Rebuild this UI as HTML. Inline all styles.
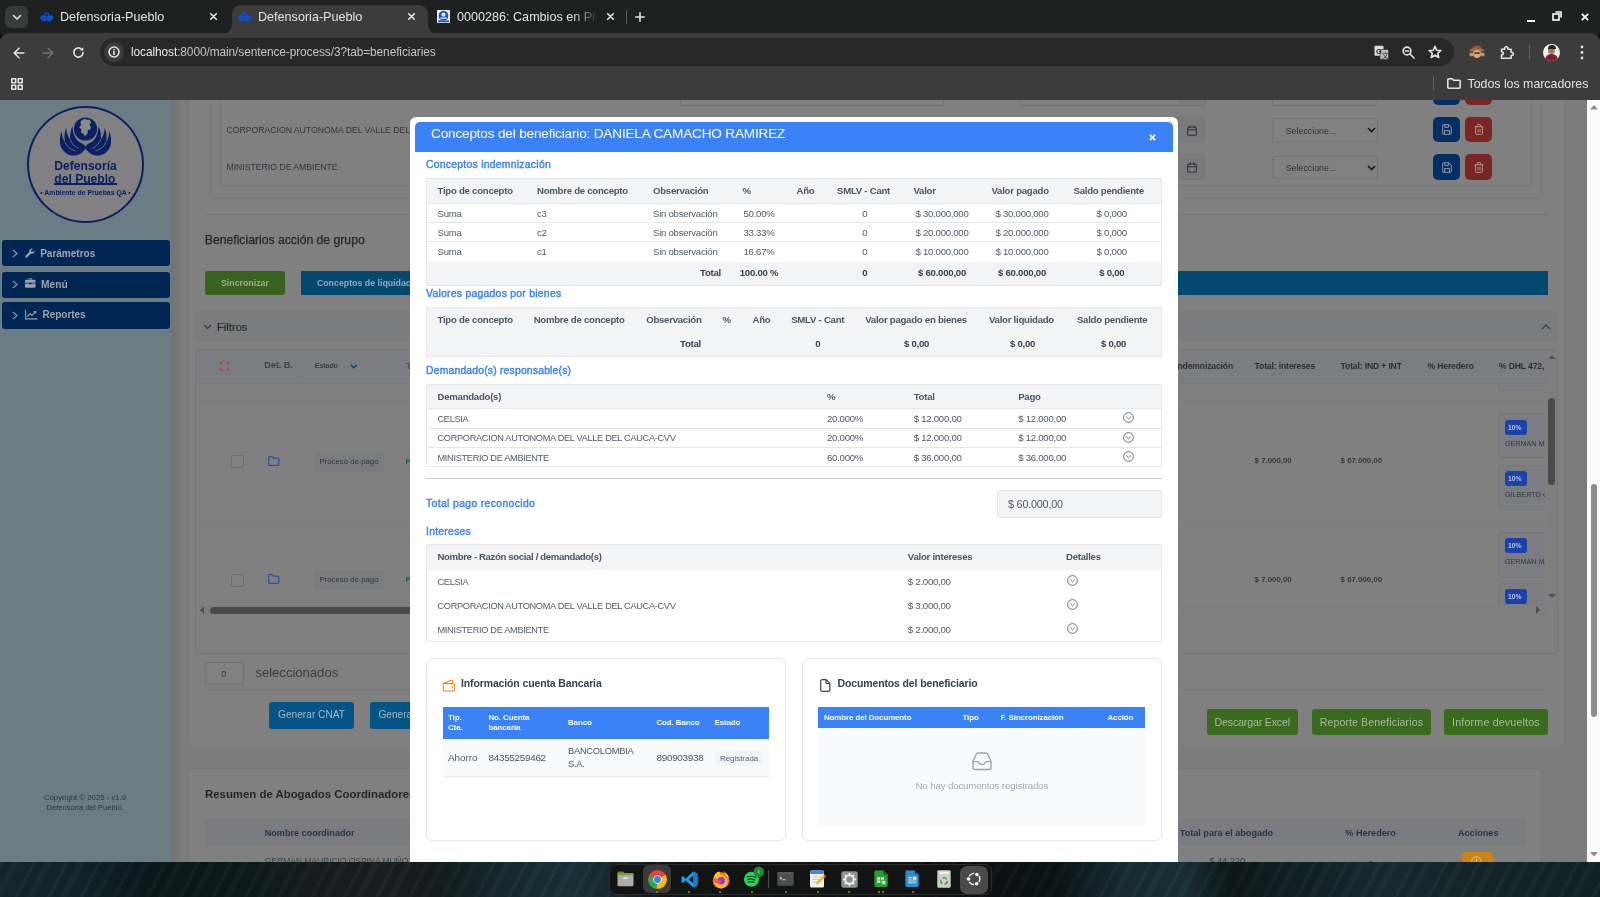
<!DOCTYPE html>
<html lang="es">
<head>
<meta charset="utf-8">
<title>Defensoria-Pueblo</title>
<style>
*{box-sizing:border-box}
html,body{margin:0;padding:0}
body{width:1600px;height:897px;overflow:hidden;position:relative;background:#0c1416;font-family:"Liberation Sans",sans-serif;color:#333}
.a{position:absolute}
#screen{left:0;top:0;width:1600px;height:897px;overflow:hidden;will-change:transform;filter:opacity(1)}
.t{position:absolute;white-space:nowrap;line-height:1;transform:translateY(-50%)}
svg{display:block;overflow:visible}

/* ---------- browser chrome ---------- */
#tabstrip{left:0;top:0;width:1600px;height:34px;background:#1f2020}
#toolbar{left:0;top:33px;width:1600px;height:67px;background:#3c3c3c;border-radius:9px 9px 0 0}
#acttab{left:232px;top:5px;width:196px;height:29px;background:#3c3c3c;border-radius:9px 9px 0 0}
#acttab:before,#acttab:after{content:"";position:absolute;bottom:0;width:9px;height:9px}
#acttab:before{left:-9px;background:radial-gradient(circle at 0 0,transparent 8.5px,#3c3c3c 9px)}
#acttab:after{right:-9px;background:radial-gradient(circle at 100% 0,transparent 8.5px,#3c3c3c 9px)}
#tabsearch{left:5px;top:6px;width:23px;height:22px;background:#3a3b3b;border-radius:6px}
.tabt{color:#e3e3e3;font-size:12.6px}
#url{left:100px;top:38px;width:1354px;height:28px;border-radius:14px;background:#282828}
.ic{stroke:#e3e3e3;fill:none;stroke-width:1.6;stroke-linecap:round;stroke-linejoin:round}

/* ---------- page (dimmed behind modal) ---------- */
#side{left:0;top:100px;width:171px;height:762px;background:#6c7c84}
#main{left:171px;top:100px;width:1416px;height:762px;background:#7c7c7c}
#sbar{left:1587px;top:100px;width:13px;height:762px;background:#fbfbfb}
.nav{left:2px;width:168px;height:26px;background:#002654;border-radius:3px;color:#aeb4bd;font-weight:700;font-size:10.8px}
.card{background:#808080;border:1px solid #787878;border-radius:5px}
.ln{background:#767676}
.dt{color:#2b2b2b;font-size:9px;letter-spacing:-.15px}
.dth{color:#2e2e2e;font-size:8.6px;font-weight:700;letter-spacing:-.15px}
.btn{border-radius:3px;text-align:center}

.hc{left:0;width:70px;background:#7b7d81;border:1px solid #74767a;border-radius:4px}
.hb{left:6.600px;width:22px;height:15px;border-radius:3px;background:#1a42a8}
.hp{left:9.500px;color:#b9c3dd;font-size:6.800px;font-weight:700}
.hn{left:6.600px;color:#33363b;font-size:7.200px}
/* ---------- modal ---------- */
#modal{left:410px;top:116.800px;width:767.500px;height:760px;background:#fff;border-radius:6px 6px 0 0}
#mhead{left:415px;top:122px;width:757.500px;height:29.500px;background:#3b82f6;border-radius:5px 5px 0 0}
.sec{color:#3b82f6;font-size:10.400px;letter-spacing:.26px;-webkit-text-stroke:.4px #3b82f6}
table.g{position:absolute;border-collapse:collapse;table-layout:fixed;font-size:9.6px;letter-spacing:-.25px;color:#505a68;border:1px solid #e5e7eb}
table.g th,table.g td{padding:1px 0 0 10.5px;text-align:left;vertical-align:middle;overflow:hidden;white-space:nowrap;line-height:1}
table.g th{padding-top:0;font-weight:700;color:#4b5563;background:#f3f4f6}
table.g td.c,table.g th.c{text-align:center;padding:1px 0 0}
table.g td.r{text-align:right;padding:1px 11px 0 0}
table.g td.u{font-size:9.2px;letter-spacing:-.3px;padding-top:2.400px}
table.g tr.f td{padding-top:0;background:#f3f4f6;font-weight:700;color:#374151}
table.g tr.b td{border-top:1px solid #e5e7eb}
table.g tr.n td{padding-top:0}
.mcard{border:1px solid #e5e7eb;border-radius:6px;background:#fff}
.bh{background:#3b82f6}
.bht{color:#fff;font-weight:700;font-size:7.9px;letter-spacing:-.08px}
.bt{color:#4b5563;font-size:9.9px}

/* ---------- desktop ---------- */
#desk{left:0;top:862px;width:1600px;height:35px;z-index:50;background:repeating-linear-gradient(118deg,rgba(255,255,255,.025) 0 3px,rgba(0,0,0,.08) 3px 11px,rgba(255,255,255,.015) 11px 17px,rgba(0,0,0,.05) 17px 29px),linear-gradient(90deg,#15282e 0,#13252b 5%,#0c181c 9%,#0d1a1e 15%,#151d1e 19%,#1a2122 24%,#141c1d 27%,#16292f 31%,#1a3239 36%,#14262c 39%,#0b1315 42%,#0a1113 61%,#0b1417 66%,#172c33 70%,#1a3138 74%,#0d171a 77%,#111f24 80%,#182b31 86%,#15262b 93%,#13232800 100%),#132328}
#dock{left:608.500px;top:863.500px;width:383px;height:31.500px;z-index:51;background:#121414;border:1px solid #2c2e2e;border-radius:7px}
.dot{top:890.700px;width:2px;height:2px;border-radius:1px;background:#6aa51d}
</style>
</head>
<body>
<div class="a" id="screen">

<!-- ======================= BROWSER CHROME ======================= -->
<div class="a" id="tabstrip"></div>
<div class="a" id="toolbar"></div>
<div class="a" id="acttab"></div>
<div class="a" id="tabsearch"></div>
<!-- tab search chevron -->
<svg class="a" style="left:11.5px;top:13.5px" width="10" height="7" viewBox="0 0 10 7"><path d="M1.5 1.5 5 5 8.500 1.5" class="ic" stroke-width="1.8"/></svg>
<!-- tab 1 -->
<svg class="a" style="left:40px;top:11px" width="14" height="11" viewBox="0 0 14 11"><circle cx="6.600" cy="3.900" r="2.050" fill="none" stroke="#0b50d4" stroke-width="1.400"/><ellipse cx="3.500" cy="7.300" rx="3.500" ry="2.500" transform="rotate(38 3.500 7.300)" fill="#0b50d4"/><ellipse cx="9.900" cy="7.300" rx="3.500" ry="2.500" transform="rotate(-38 9.900 7.300)" fill="#0b50d4"/></svg>
<div class="t tabt" style="left:60px;top:17px">Defensoria-Pueblo</div>
<svg class="a" style="left:209.600px;top:13.400px" width="7" height="7" viewBox="0 0 7 7"><path d="M.7.700 6.300 6.300M6.300.700.7 6.300" class="ic" stroke-width="1.400"/></svg>
<!-- tab 2 (active) -->
<svg class="a" style="left:238px;top:11px" width="14" height="11" viewBox="0 0 14 11"><circle cx="6.600" cy="3.900" r="2.050" fill="none" stroke="#0b50d4" stroke-width="1.400"/><ellipse cx="3.500" cy="7.300" rx="3.500" ry="2.500" transform="rotate(38 3.500 7.300)" fill="#0b50d4"/><ellipse cx="9.900" cy="7.300" rx="3.500" ry="2.500" transform="rotate(-38 9.900 7.300)" fill="#0b50d4"/></svg>
<div class="t tabt" style="left:258px;top:17px">Defensoria-Pueblo</div>
<svg class="a" style="left:407.600px;top:13.400px" width="7" height="7" viewBox="0 0 7 7"><path d="M.7.700 6.300 6.300M6.300.700.7 6.300" class="ic" stroke-width="1.400"/></svg>
<!-- tab 3 -->
<div class="a" style="left:436.700px;top:10px;width:13.300px;height:13px;background:#f4f6fa;border-radius:1px"></div>
<svg class="a" style="left:436.850px;top:10px" width="13" height="13" viewBox="0 0 13 13"><circle cx="6.500" cy="5.700" r="4.900" fill="#1b55b3"/><circle cx="6.500" cy="4.700" r="2.100" fill="#dfe7f5"/><path d="M3.300 7.500h6.400v1.300H3.300z" fill="#dfe7f5"/><rect x="1" y="10.400" width="11" height="1.900" fill="#1b55b3"/></svg>
<div class="a" style="left:457px;top:8px;width:141px;height:18px;overflow:hidden;-webkit-mask-image:linear-gradient(90deg,#000 82%,transparent 100%);mask-image:linear-gradient(90deg,#000 82%,transparent 100%)"><div class="t tabt" style="left:0;top:9px">0000286: Cambios en Proceso</div></div>
<svg class="a" style="left:606.600px;top:13.400px" width="7" height="7" viewBox="0 0 7 7"><path d="M.7.700 6.300 6.300M6.300.700.7 6.300" class="ic" stroke-width="1.400"/></svg>
<div class="a" style="left:625.5px;top:10px;width:1px;height:14px;background:#5a5b5b"></div>
<svg class="a" style="left:635px;top:12px" width="10" height="10" viewBox="0 0 10 10"><path d="M5 .8V9.200M.8 5H9.200" class="ic" stroke-width="1.500"/></svg>
<!-- window controls -->
<div class="a" style="left:1526.500px;top:19.500px;width:8.500px;height:2px;background:#fff"></div>
<svg class="a" style="left:1552px;top:11px" width="10" height="10" viewBox="0 0 10 10"><rect x="1" y="3" width="6" height="6" fill="none" stroke="#fff" stroke-width="1.600"/><path d="M3.500 1H9V6.500" fill="none" stroke="#fff" stroke-width="1.600"/></svg>
<svg class="a" style="left:1581px;top:12.500px" width="8" height="8" viewBox="0 0 8 8"><path d="M.8.8 7.200 7.200M7.200.8.8 7.200" fill="none" stroke="#fff" stroke-width="1.800"/></svg>
<!-- nav buttons -->
<svg class="a" style="left:12.500px;top:46.500px" width="12" height="12" viewBox="0 0 12 12"><path d="M11 6H1.500M6 1.200 1.200 6 6 10.800" class="ic" stroke-width="1.500"/></svg>
<svg class="a" style="left:42px;top:46.500px" width="12" height="12" viewBox="0 0 12 12"><path d="M1 6H10.500M6 1.200 10.800 6 6 10.800" class="ic" style="stroke:#6f7070" stroke-width="1.500"/></svg>
<svg class="a" style="left:72px;top:46px" width="13" height="13" viewBox="0 0 13 13"><path d="M11 6.500A4.600 4.600 0 1 1 9.600 3.200" class="ic" stroke-width="1.600"/><path d="M11.300 1.300V4.600H8z" fill="#e3e3e3"/></svg>
<!-- url bar -->
<div class="a" id="url"></div>
<div class="a" style="left:104px;top:42px;width:20px;height:20px;border-radius:10px;background:#3c3c3c"></div>
<svg class="a" style="left:108px;top:46px" width="12" height="12" viewBox="0 0 12 12"><circle cx="6" cy="6" r="5" class="ic" stroke-width="1.300"/><path d="M6 5.500V8.600" class="ic" stroke-width="1.400"/><circle cx="6" cy="3.600" r=".8" fill="#e3e3e3"/></svg>
<div class="t" style="left:131px;top:52.500px;font-size:11.900px;letter-spacing:-.09px;color:#e8e8e8">localhost<span style="color:#c4c4c4">:8000/main/sentence-process/3?tab=beneficiaries</span></div>
<!-- url icons -->
<svg class="a" style="left:1374px;top:45px" width="15" height="15" viewBox="0 0 15 15"><rect x=".5" y=".8" width="9" height="10" rx="1" fill="#dcdcdc"/><rect x="6" y="4.500" width="8.500" height="10" rx="1" fill="#bdbdbd" stroke="#282828" stroke-width=".6"/><text x="2" y="8.800" font-size="7.500" font-weight="700" font-family="Liberation Sans, sans-serif" fill="#282828">G</text><text x="8" y="12.800" font-size="6.500" font-family="Liberation Sans, Noto Sans CJK SC, sans-serif" fill="#282828">文</text></svg>
<svg class="a" style="left:1402px;top:46px" width="13" height="13" viewBox="0 0 13 13"><circle cx="5" cy="5" r="3.900" class="ic" stroke-width="1.500"/><path d="M8 8 12 12M3.300 5H6.700" class="ic" stroke-width="1.500"/></svg>
<svg class="a" style="left:1428px;top:45px" width="14" height="14" viewBox="0 0 14 14"><path d="M7 1.300 8.700 5.200 12.900 5.500 9.700 8.300 10.700 12.500 7 10.200 3.300 12.500 4.300 8.300 1.100 5.500 5.300 5.200z" class="ic" stroke-width="1.400"/></svg>
<!-- extensions -->
<svg class="a" style="left:1469px;top:45px" width="16" height="14" viewBox="0 0 16 14"><ellipse cx="8" cy="4" rx="5" ry="3.500" fill="#8c5a3c"/><ellipse cx="8" cy="5.300" rx="7.500" ry="1.700" fill="#a86f4a"/><ellipse cx="8" cy="9" rx="4.300" ry="4" fill="#d9a57e"/><circle cx="2.300" cy="9.500" r="2" fill="#c98f68"/><circle cx="13.700" cy="9.500" r="2" fill="#c98f68"/><rect x="5" y="7.300" width="6" height="1.600" rx=".8" fill="#5c3b28"/></svg>
<svg class="a" style="left:1500px;top:45px" width="14" height="14" viewBox="0 0 14 14"><path d="M1.500 4.200h3.200V3.300a1.600 1.600 0 0 1 3.200 0v.9h3.200v3.100h.6a1.600 1.600 0 0 1 0 3.200h-.6v2.800H1.500V9.800h.300a1.500 1.500 0 0 0 0-3h-.3z" class="ic" stroke-width="1.600"/></svg>
<div class="a" style="left:1528.500px;top:45px;width:1px;height:14px;background:#5e5e5e"></div>
<div class="a" style="left:1543px;top:43.500px;width:17px;height:17px;border-radius:50%;background:#f3f1f0;overflow:hidden"><div class="a" style="left:5px;top:2.500px;width:7px;height:8px;border-radius:50%;background:#a9765c"></div><div class="a" style="left:4.500px;top:1.500px;width:8px;height:3.500px;border-radius:4px 4px 0 0;background:#2a2020"></div><div class="a" style="left:2px;top:10px;width:13px;height:9px;border-radius:6px 6px 0 0;background:#7a1f2b"></div></div>
<svg class="a" style="left:1580px;top:45px" width="4" height="15" viewBox="0 0 4 15"><circle cx="2" cy="2" r="1.400" fill="#e3e3e3"/><circle cx="2" cy="7.500" r="1.400" fill="#e3e3e3"/><circle cx="2" cy="13" r="1.400" fill="#e3e3e3"/></svg>
<!-- bookmarks bar -->
<svg class="a" style="left:10.500px;top:77.500px" width="12" height="12" viewBox="0 0 12 12"><rect x=".8" y=".8" width="3.900" height="3.900" class="ic" stroke-width="1.300"/><rect x="7.300" y=".8" width="3.900" height="3.900" class="ic" stroke-width="1.300"/><rect x=".8" y="7.300" width="3.900" height="3.900" class="ic" stroke-width="1.300"/><rect x="7.300" y="7.300" width="3.900" height="3.900" class="ic" stroke-width="1.300"/></svg>
<div class="a" style="left:1432.500px;top:77px;width:1px;height:13px;background:#666"></div>
<svg class="a" style="left:1446.500px;top:77.500px" width="14" height="11" viewBox="0 0 14 11"><path d="M.8 1.800a1 1 0 0 1 1-1h3.400l1.300 1.500h5.700a1 1 0 0 1 1 1v6a1 1 0 0 1-1 1H1.800a1 1 0 0 1-1-1z" class="ic" stroke-width="1.400"/></svg>
<div class="t" style="left:1467.500px;top:83.500px;font-size:12.400px;letter-spacing:-.02px;color:#e3e3e3">Todos los marcadores</div>


<!-- ======================= PAGE ======================= -->
<div class="a" id="side"></div>
<div class="a" id="main"></div>
<div class="a" id="sbar"></div>
<div class="a" style="left:171px;top:100px;width:10px;height:762px;background:linear-gradient(90deg,#727272,#7b7b7b)"></div>
<!-- logo -->
<div class="a" style="left:27px;top:105.800px;width:117px;height:117.400px;border-radius:50%;background:#818183;border:2px solid #0b2063"></div>
<svg class="a" style="left:59px;top:116px" width="53" height="41" viewBox="0 0 53 41">
<circle cx="26.500" cy="13" r="11.600" fill="#0b2063"/>
<path d="M22.300 4.600l3.800-1.900 1.900 1.300 2.800-.4 1.300 3.200-1.700 2 1.500 2.400-.6 2.200-2.300.7-.5 3.400-2.400 2.800-1.700-2.600-2.300-.9.200-3.300-2-2.300 1.800-2.300-.7-2.200z" fill="#8a8a8c"/>
<path d="M25 34.500c-2.500 3.500-7 5.500-12 5C6 38.500 1.500 33 1 26.500c-.3-4 .3-8 1.800-11 .2 4.500 1.200 8 3.200 10.500-1-5-.6-10 1.200-14 .5 5 1.800 9 4 11.500-.5-5 .2-9.500 2.300-13 .3 5.500 1.500 9.500 3.800 12.500 1.500 2 3.800 3.500 6.200 4.500l2.800 2.500c1 .800.700 2.700-1.300 4.500z" fill="#0b2063"/>
<path d="M28 34.500c2.500 3.500 7 5.500 12 5 7-1 11.500-6.500 12-13 .3-4-.3-8-1.800-11-.2 4.500-1.200 8-3.200 10.500 1-5 .6-10-1.200-14-.5 5-1.800 9-4 11.500.5-5-.2-9.500-2.300-13-.3 5.500-1.500 9.500-3.800 12.500-1.500 2-3.800 3.500-6.200 4.500l-2.800 2.500c-1 .800-.700 2.700 1.300 4.500z" fill="#0b2063"/>
<path d="M6 26c1.500 4.500 5.500 7.500 10.500 9M11.200 23.500c1.300 4 4.300 7 8.300 9M47 26c-1.500 4.500-5.500 7.500-10.500 9M41.800 23.500c-1.300 4-4.300 7-8.300 9" fill="none" stroke="#818183" stroke-width=".8"/>
</svg>
<div class="t" style="left:54.300px;top:165.900px;color:#0b2063;font-weight:700;font-size:12.100px">Defensoría</div>
<div class="t" style="left:54.300px;top:178.500px;color:#0b2063;font-weight:700;font-size:12.100px">del Pueblo</div>
<div class="a" style="left:54.300px;top:183.300px;width:62.300px;height:1.500px;background:#0b2063"></div>
<div class="t" style="left:40.300px;top:192.800px;color:#0b2063;font-weight:700;font-size:6.870px">• Ambiente de Pruebas QA •</div>
<!-- nav -->
<div class="a nav" style="top:239.800px;height:26.400px"></div>
<div class="a nav" style="top:271.600px;height:26.300px"></div>
<div class="a nav" style="top:302.300px;height:26.500px"></div>
<svg class="a" style="left:12px;top:249.300px" width="6" height="9" viewBox="0 0 6 9"><path d="M.8.800 5 4.500.8 8.200" fill="none" stroke="#9aa0a8" stroke-width="1.100"/></svg>
<svg class="a" style="left:12px;top:280.200px" width="6" height="9" viewBox="0 0 6 9"><path d="M.8.800 5 4.500.8 8.200" fill="none" stroke="#9aa0a8" stroke-width="1.100"/></svg>
<svg class="a" style="left:12px;top:310.900px" width="6" height="9" viewBox="0 0 6 9"><path d="M.8.800 5 4.500.8 8.200" fill="none" stroke="#9aa0a8" stroke-width="1.100"/></svg>
<svg class="a" style="left:25px;top:248px" width="10" height="10" viewBox="0 0 10 10"><path d="M9.300 2.300 7.600 4 6.300 3.700 6 2.400 7.700.7A2.700 2.700 0 0 0 4.300 4L.6 7.700a1.100 1.100 0 0 0 1.600 1.600L6 5.700A2.700 2.700 0 0 0 9.300 2.300z" fill="#9aa0a8"/></svg>
<svg class="a" style="left:25px;top:278px" width="10.500" height="10" viewBox="0 0 10.500 10"><path d="M3.500 1.800V.9c0-.4.300-.7.700-.7h2.100c.4 0 .7.300.7.700v.9h2.600c.5 0 .9.400.9.900v2H0v-2c0-.5.400-.9.900-.9zM4.300 1v.8h1.900V1zM0 5.500h3.900v.8h2.700v-.8h3.900v3.300c0 .5-.4.900-.9.900H.9c-.5 0-.9-.4-.9-.9z" fill="#9aa0a8"/></svg>
<svg class="a" style="left:24.700px;top:310px" width="13" height="9.500" viewBox="0 0 13 9.500"><path d="M.6 0V8.900H12.600M2.400 6.500 5 3.800 7 5.500 10.500 1.700M8.800 1.500h1.900v1.900" fill="none" stroke="#9aa0a8" stroke-width="1.100"/></svg>
<div class="t" style="left:40.200px;top:253.800px;color:#9da4ad;font-weight:700;font-size:10px">Parámetros</div>
<div class="t" style="left:41px;top:284.900px;color:#9da4ad;font-weight:700;font-size:10.200px">Menú</div>
<div class="t" style="left:42.500px;top:315.400px;color:#9da4ad;font-weight:700;font-size:10px;letter-spacing:-.03px">Reportes</div>
<!-- footer -->
<div class="t" style="left:43.900px;top:797.800px;color:#2a363b;font-size:7.790px">Copyright © 2025 - v1.9</div>
<div class="t" style="left:46.300px;top:808.200px;color:#2a363b;font-size:7.660px">Defensoria del Pueblo.</div>

<div class="a" style="left:0;top:100px;width:1600px;height:762px;overflow:hidden"><div class="a" style="left:0;top:-100px;width:1600px;height:897px">
<!-- card 1 -->
<div class="a card" style="left:188px;top:60px;width:1376.500px;height:686.500px"></div>
<div class="a" style="left:210px;top:60px;width:1332.400px;height:138px;border:1px solid #797979;border-radius:4px"></div>
<div class="a" style="left:220px;top:60px;width:1312px;height:127px;border:1px solid #787878;border-radius:3px"></div>
<div class="t dt" style="left:226.500px;top:129.900px;font-size:8.700px;letter-spacing:-.02px;color:#30353d">CORPORACION AUTONOMA DEL VALLE DEL CAUCA-CVV</div>
<div class="t dt" style="left:226.500px;top:167.400px;font-size:8.700px;letter-spacing:-.02px;color:#30353d">MINISTERIO DE AMBIENTE</div>
<!-- row controls right -->
<div class="a" style="left:1272.300px;top:82.800px;width:105.700px;height:23px;border:1px solid #737373;border-radius:3px"></div>
<div class="a" style="left:1178.500px;top:82.800px;width:27px;height:23px;border:1px solid #747474;border-radius:0 3px 3px 0;background:#7a7b7d"></div>
<div class="a" style="left:680px;top:82.800px;width:264px;height:23px;border:1px solid #737373;border-radius:3px"></div>
<div class="a" style="left:1019px;top:82.800px;width:186.500px;height:23px;border:1px solid #737373;border-radius:3px"></div>
<div class="a" style="left:1433px;top:80px;width:27px;height:25px;border-radius:5px;background:#022f66"></div>
<div class="a" style="left:1465px;top:80px;width:27px;height:25px;border-radius:5px;background:#7a2624"></div>

<div class="a" style="left:1165px;top:116.800px;width:40.400px;height:25.700px;border:1px solid #747577;border-radius:0 4px 4px 0;background:#7a7b7d"></div>
<div class="a" style="left:1165px;top:154.200px;width:40.400px;height:25.800px;border:1px solid #747577;border-radius:0 4px 4px 0;background:#7a7b7d"></div>
<svg class="a" style="left:1187px;top:125px" width="10" height="11" viewBox="0 0 10 11"><rect x=".7" y="2" width="8.600" height="8.300" rx="1.300" fill="none" stroke="#2f3338" stroke-width="1.100"/><path d="M.7 4.800H9.300M3 .5V3M7 .5V3" fill="none" stroke="#2f3338" stroke-width="1.100"/></svg>
<svg class="a" style="left:1187px;top:162px" width="10" height="11" viewBox="0 0 10 11"><rect x=".7" y="2" width="8.600" height="8.300" rx="1.300" fill="none" stroke="#2f3338" stroke-width="1.100"/><path d="M.7 4.800H9.300M3 .5V3M7 .5V3" fill="none" stroke="#2f3338" stroke-width="1.100"/></svg>
<div class="a" style="left:1272.300px;top:118.400px;width:105.700px;height:23.400px;border:1px solid #747474;border-radius:3px;background:#818181"></div>
<div class="a" style="left:1272.300px;top:156.300px;width:105.700px;height:23.200px;border:1px solid #747474;border-radius:3px;background:#818181"></div>
<div class="t" style="left:1285.700px;top:130.800px;font-size:8.850px;color:#2e3238">Seleccione...</div>
<div class="t" style="left:1285.700px;top:168.400px;font-size:8.850px;color:#2e3238">Seleccione...</div>
<svg class="a" style="left:1366.500px;top:127px" width="9" height="6" viewBox="0 0 9 6"><path d="M1 1 4.500 4.500 8 1" fill="none" stroke="#1a1a1a" stroke-width="1.700"/></svg>
<svg class="a" style="left:1366.500px;top:164.500px" width="9" height="6" viewBox="0 0 9 6"><path d="M1 1 4.500 4.500 8 1" fill="none" stroke="#1a1a1a" stroke-width="1.700"/></svg>
<div class="a" style="left:1433px;top:116.600px;width:27px;height:25.600px;border-radius:5px;background:#022f66"></div>
<div class="a" style="left:1465px;top:116.600px;width:27px;height:25.600px;border-radius:5px;background:#7a2624"></div>
<div class="a" style="left:1433px;top:154px;width:27px;height:25.700px;border-radius:5px;background:#022f66"></div>
<div class="a" style="left:1465px;top:154px;width:27px;height:25.700px;border-radius:5px;background:#7a2624"></div>
<svg class="a" style="left:1441.500px;top:123.500px" width="10" height="11" viewBox="0 0 10 11"><path d="M.7 1.500a.8.800 0 0 1 .8-.8h5.300l2.500 2.500v6.300a.8.800 0 0 1-.8.800h-7a.8.800 0 0 1-.8-.8zM2.800.8v2.600h3.600V.8M2.500 10.200V6.600h5v3.600" fill="none" stroke="#8f97a6" stroke-width="1"/></svg>
<svg class="a" style="left:1441.500px;top:161.500px" width="10" height="11" viewBox="0 0 10 11"><path d="M.7 1.500a.8.800 0 0 1 .8-.8h5.300l2.500 2.500v6.300a.8.800 0 0 1-.8.800h-7a.8.800 0 0 1-.8-.8zM2.800.8v2.600h3.600V.8M2.500 10.200V6.600h5v3.600" fill="none" stroke="#8f97a6" stroke-width="1"/></svg>
<svg class="a" style="left:1473.500px;top:123.500px" width="10" height="11" viewBox="0 0 10 11"><path d="M.5 2.800h9M3.300 2.600V1.200a.5.500 0 0 1 .5-.5h2.400a.5.500 0 0 1 .5.500v1.400M1.600 3v6.600a.8.800 0 0 0 .8.800h5.200a.8.800 0 0 0 .8-.8V3M4 5v3.300M6 5v3.300" fill="none" stroke="#b79391" stroke-width="1"/></svg>
<svg class="a" style="left:1473.500px;top:161.500px" width="10" height="11" viewBox="0 0 10 11"><path d="M.5 2.800h9M3.300 2.600V1.200a.5.500 0 0 1 .5-.5h2.400a.5.500 0 0 1 .5.500v1.400M1.600 3v6.600a.8.800 0 0 0 .8.800h5.200a.8.800 0 0 0 .8-.8V3M4 5v3.300M6 5v3.300" fill="none" stroke="#b79391" stroke-width="1"/></svg>

<div class="a ln" style="left:205px;top:214px;width:1343.500px;height:1px"></div>
<div class="t" style="left:204.800px;top:239.700px;font-size:12.200px;color:#262626;-webkit-text-stroke:.25px #262626">Beneficiarios acción de grupo</div>
<div class="a btn" style="left:204.800px;top:270.900px;width:80px;height:24px;background:#3a621f"></div>
<div class="t" style="left:221px;top:283.200px;font-size:8.800px;font-weight:700;color:#9eab95">Sincronizar</div>
<div class="a" style="left:301px;top:270.900px;width:1247.300px;height:24px;background:#03496f"></div>
<div class="t" style="left:316.900px;top:283.200px;font-size:8.800px;font-weight:700;color:#8fa9bb">Conceptos de liquidación</div>
<!-- filtros -->
<div class="a" style="left:194.500px;top:311px;width:1363.500px;height:31.200px;background:#7b7c7e;border-radius:3px"></div>
<svg class="a" style="left:202.500px;top:324px" width="9" height="6" viewBox="0 0 9 6"><path d="M1 1 4.500 4.500 8 1" fill="none" stroke="#333" stroke-width="1.100"/></svg>
<div class="t" style="left:217px;top:327.700px;font-size:11.200px;color:#2c2c2c;-webkit-text-stroke:.2px #2c2c2c">Filtros</div>
<svg class="a" style="left:1540.500px;top:323.500px" width="10" height="6" viewBox="0 0 10 6"><path d="M1 5 5 1 9 5" fill="none" stroke="#3a3a3a" stroke-width="1.100"/></svg>
<!-- table -->
<div class="a" style="left:194.500px;top:349.400px;width:1363.300px;height:304.400px;border:1px solid #757678;border-radius:5px"></div>
<div class="a" style="left:195.500px;top:350.400px;width:1351.500px;height:33px;background:#7b7d80;border-radius:4px 0 0 0"></div>
<div class="a" style="left:195.500px;top:383.400px;width:1351.500px;height:1px;background:#76787b"></div>
<div class="a" style="left:195.500px;top:402px;width:1351.500px;height:1px;background:#787a7d"></div>
<div class="a" style="left:195.500px;top:520.500px;width:1351.500px;height:1px;background:#787a7d"></div>
<div class="a" style="left:302px;top:350.400px;width:1px;height:33px;background:#787a7d"></div>
<svg class="a" style="left:219.800px;top:362px" width="8.700" height="8.700" viewBox="0 0 9.500 9.500"><path d="M.6 3V.6H3M6.500.6H8.900V3M8.900 6.500V8.900H6.500M3 8.900H.6V6.500" fill="none" stroke="#9e4141" stroke-width="1.100"/></svg>
<div class="t dth" style="left:264.300px;top:366px;font-size:9.300px;color:#404449">Det. B.</div>
<div class="t dth" style="left:314.800px;top:366px;font-size:7.200px;color:#3a3d42">Estado</div>
<svg class="a" style="left:349.500px;top:363.500px" width="7.500" height="5" viewBox="0 0 7.500 5"><path d="M.8.800 3.750 3.800 6.700.8" fill="none" stroke="#123885" stroke-width="1.400"/></svg>
<div class="t dth" style="left:406.300px;top:366px;color:#4a4d52">T</div>
<div class="t dth" style="right:367px;top:366px">Total: indemnización</div>
<div class="t dth" style="left:1254.600px;top:366px">Total: intereses</div>
<div class="t dth" style="left:1340.600px;top:366px">Total: IND + INT</div>
<div class="t dth" style="left:1427.500px;top:366px">% Heredero</div>
<div class="a" style="left:1499px;top:356px;width:48px;height:20px;overflow:hidden"><div class="t dth" style="left:0;top:10px">% DHL 472,</div></div>
<!-- rows -->
<div class="a" style="left:230.500px;top:455.400px;width:13px;height:13px;border:1px solid #6b6d70;border-radius:2px;background:#818181"></div>
<div class="a" style="left:230.500px;top:573.800px;width:13px;height:13px;border:1px solid #6b6d70;border-radius:2px;background:#818181"></div>
<svg class="a" style="left:267.500px;top:456px" width="11.500" height="10" viewBox="0 0 11.500 10"><path d="M.7 1.600a.9.900 0 0 1 .9-.9h2.500l1.300 1.500h4.500a.9.900 0 0 1 .9.900v5.400a.9.900 0 0 1-.9.900H1.600a.9.900 0 0 1-.9-.9z" fill="none" stroke="#2d4f9e" stroke-width="1.200"/></svg>
<svg class="a" style="left:267.500px;top:574.400px" width="11.500" height="10" viewBox="0 0 11.500 10"><path d="M.7 1.600a.9.900 0 0 1 .9-.9h2.500l1.300 1.500h4.500a.9.900 0 0 1 .9.900v5.400a.9.900 0 0 1-.9.900H1.600a.9.900 0 0 1-.9-.9z" fill="none" stroke="#2d4f9e" stroke-width="1.200"/></svg>
<div class="a" style="left:314px;top:451.700px;width:69.800px;height:20px;background:#7a7c80;border-radius:2px"></div>
<div class="a" style="left:314px;top:570.100px;width:69.800px;height:20px;background:#7a7c80;border-radius:2px"></div>
<div class="t" style="left:319.400px;top:461.800px;font-size:7.830px;color:#30343a">Proceso de pago</div>
<div class="t" style="left:319.400px;top:580.200px;font-size:7.830px;color:#30343a">Proceso de pago</div>
<div class="t" style="left:405.600px;top:462px;font-size:7.500px;font-weight:700;color:#0c6b35">P</div>
<div class="t" style="left:405.600px;top:580.400px;font-size:7.500px;font-weight:700;color:#0c6b35">P</div>
<div class="t" style="left:1254.600px;top:461.400px;font-size:7.850px;color:#33363b;font-weight:700">$ 7.000,00</div>
<div class="t" style="left:1340.600px;top:461.400px;font-size:7.850px;color:#33363b;font-weight:700">$ 67.000,00</div>
<div class="t" style="left:1254.600px;top:579.500px;font-size:7.850px;color:#33363b;font-weight:700">$ 7.000,00</div>
<div class="t" style="left:1340.600px;top:579.500px;font-size:7.850px;color:#33363b;font-weight:700">$ 67.000,00</div>
<!-- heredero cards -->
<div class="a" style="left:1498.400px;top:383.900px;width:46.500px;height:221px;overflow:hidden">
<div class="a hc" style="top:-20px;height:27px"></div>
<div class="a hc" style="top:29px;height:45.500px"></div><div class="a hb" style="top:36.400px"></div><div class="t hp" style="top:44.200px">10%</div><div class="t hn" style="top:60.400px">GERMAN MAURICIO</div>
<div class="a hc" style="top:80.800px;height:45px"></div><div class="a hb" style="top:87.100px"></div><div class="t hp" style="top:94.900px">10%</div><div class="t hn" style="top:111.100px">GILBERTO CASTILLO</div>
<div class="a hc" style="top:147.700px;height:46px"></div><div class="a hb" style="top:154.100px"></div><div class="t hp" style="top:161.900px">10%</div><div class="t hn" style="top:178.400px">GERMAN MAURICIO</div>
<div class="a hc" style="top:199.200px;height:45px"></div><div class="a hb" style="top:205.500px"></div><div class="t hp" style="top:213.300px">10%</div>
</div>
<!-- inner scrollbars -->
<div class="a" style="left:1547px;top:350.400px;width:10px;height:255px;background:#7e7e7e"></div>
<svg class="a" style="left:1547.500px;top:354.500px" width="8" height="4" viewBox="0 0 8 4"><path d="M0 4 4 0 8 4z" fill="#505050"/></svg>
<svg class="a" style="left:1547.500px;top:594px" width="8" height="4" viewBox="0 0 8 4"><path d="M0 0 4 4 8 0z" fill="#505050"/></svg>
<div class="a" style="left:1547.500px;top:398px;width:7px;height:86.500px;border-radius:3.500px;background:#4b4b4b"></div>
<div class="a" style="left:195.500px;top:605.500px;width:1351.500px;height:9px;background:#7e7e7e"></div>
<svg class="a" style="left:199.500px;top:606px" width="4" height="8" viewBox="0 0 4 8"><path d="M4 0 0 4 4 8z" fill="#505050"/></svg>
<svg class="a" style="left:1536px;top:606px" width="4" height="8" viewBox="0 0 4 8"><path d="M0 0 4 4 0 8z" fill="#505050"/></svg>
<div class="a" style="left:210px;top:606.500px;width:420px;height:7px;border-radius:3.500px;background:#4b4b4b"></div>
<!-- below table -->
<div class="a" style="left:205px;top:662.300px;width:38.700px;height:23px;border:1px solid #727272;border-radius:3px;background:#818181"></div>
<div class="t" style="left:221.300px;top:673.800px;font-size:9px;color:#333">0</div>
<div class="t" style="left:255.400px;top:673.200px;font-size:13.070px;color:#3b3b3b">seleccionados</div>
<div class="a ln" style="left:205px;top:690.300px;width:1344px;height:1px;background:#797979"></div>
<div class="a btn" style="left:269px;top:701.800px;width:85.200px;height:27px;background:#045486"></div>
<div class="t" style="left:278px;top:715.300px;font-size:10.160px;color:#a3b8c8">Generar CNAT</div>
<div class="a btn" style="left:370px;top:701.800px;width:120px;height:27px;background:#045486"></div>
<div class="t" style="left:378.400px;top:715.300px;font-size:10.160px;color:#a3b8c8">Generar</div>
<div class="a btn" style="left:1206.600px;top:708.900px;width:91.400px;height:26px;background:#3a6a1e"></div>
<div class="t" style="left:1214.600px;top:721.800px;font-size:10.600px;letter-spacing:-.16px;color:#a9b9a0">Descargar Excel</div>
<div class="a btn" style="left:1312px;top:708.900px;width:118.700px;height:26px;background:#3a6a1e"></div>
<div class="t" style="left:1319.700px;top:721.800px;font-size:10.600px;letter-spacing:.1px;color:#a9b9a0">Reporte Beneficiarios</div>
<div class="a btn" style="left:1444.100px;top:708.900px;width:104px;height:26px;background:#3a6a1e"></div>
<div class="t" style="left:1452.100px;top:721.800px;font-size:10.600px;letter-spacing:.21px;color:#a9b9a0">Informe devueltos</div>
<!-- card 2 -->
<div class="a card" style="left:188px;top:768.400px;width:1354px;height:130px"></div>
<div class="t" style="left:205px;top:794.800px;font-size:11.400px;font-weight:700;color:#262626">Resumen de Abogados Coordinadores</div>
<div class="a" style="left:205px;top:819.300px;width:1321.300px;height:27.100px;background:#7a7c80"></div>
<div class="t dth" style="left:264.700px;top:833.900px;font-size:9.110px;letter-spacing:0;color:#2b3147">Nombre coordinador</div>
<div class="t dth" style="left:1179.800px;top:833.900px;font-size:9.110px;letter-spacing:0;color:#2b3147">Total para el abogado</div>
<div class="t dth" style="left:1345.300px;top:833.900px;font-size:9.110px;letter-spacing:0;color:#2b3147">% Heredero</div>
<div class="t dth" style="left:1458px;top:833.900px;font-size:9.110px;letter-spacing:0;color:#2b3147">Acciones</div>
<div class="t dt" style="left:264.700px;top:860.500px;font-size:8.700px;color:#3a3f48">GERMAN MAURICIO OSPINA MUÑOZ</div>
<div class="t dt" style="left:1209.300px;top:860.500px;font-size:9.500px;color:#3a3f48">$ 44.220</div>
<div class="t dt" style="left:1369px;top:860.500px;font-size:9.500px;color:#3a3f48">-</div>
<div class="a" style="left:1461.700px;top:852px;width:31.500px;height:24px;border-radius:4px;background:#c98519"></div>
<svg class="a" style="left:1471px;top:855.500px" width="11" height="11" viewBox="0 0 11 11"><circle cx="5.500" cy="5.500" r="4.700" fill="none" stroke="#e4c38d" stroke-width="1"/><path d="M5.500 2.800V6" stroke="#e4c38d" stroke-width="1.100"/></svg>
<!-- page scrollbar -->
<svg class="a" style="left:1589.500px;top:104.500px" width="8" height="4.500" viewBox="0 0 8 4.500"><path d="M0 4.500 4 0 8 4.500z" fill="#8b8b8b"/></svg>
<svg class="a" style="left:1589.500px;top:851.500px" width="8" height="4.500" viewBox="0 0 8 4.500"><path d="M0 0 4 4.500 8 0z" fill="#8b8b8b"/></svg>
<div class="a" style="left:1590.500px;top:484px;width:6.500px;height:232.500px;border-radius:3.300px;background:#8c8c8c"></div>

</div></div>

<!-- ======================= MODAL ======================= -->
<div class="a" id="modal"></div>
<div class="a" id="mhead"></div>
<div class="t" style="left:431px;top:134px;color:#fff;font-size:13.6px;letter-spacing:-.18px">Conceptos del beneficiario: DANIELA CAMACHO RAMIREZ</div>
<svg class="a" style="left:1148.500px;top:133.800px" width="7" height="7" viewBox="0 0 7 7" role="img" aria-label="Cerrar"><path d="M.9.900 6.100 6.100M6.100.900.900 6.100" fill="none" stroke="#fff" stroke-width="1.700"/></svg>

<div class="t sec" style="left:426px;top:165px">Conceptos indemnización</div>
<table class="g" style="left:426px;top:178px;width:735.5px">
<colgroup><col style="width:100px"><col style="width:116px"><col style="width:89.5px"><col style="width:54px"><col style="width:40.5px"><col style="width:76.5px"><col style="width:78px"><col style="width:82px"><col></colgroup>
<tr style="height:25px"><th>Tipo de concepto</th><th>Nombre de concepto</th><th>Observación</th><th>%</th><th>Año</th><th>SMLV - Cant</th><th>Valor</th><th>Valor pagado</th><th>Saldo pendiente</th></tr>
<tr class="b" style="height:19px"><td>Suma</td><td>c3</td><td>Sin observación</td><td class="c">50.00%</td><td></td><td class="c">0</td><td class="c">$ 30.000,000</td><td class="c">$ 30.000,000</td><td class="c">$ 0,000</td></tr>
<tr class="b" style="height:19.250px"><td>Suma</td><td>c2</td><td>Sin observación</td><td class="c">33.33%</td><td></td><td class="c">0</td><td class="c">$ 20.000,000</td><td class="c">$ 20.000,000</td><td class="c">$ 0,000</td></tr>
<tr class="b n" style="height:19.750px"><td>Suma</td><td>c1</td><td>Sin observación</td><td class="c">16.67%</td><td></td><td class="c">0</td><td class="c">$ 10.000,000</td><td class="c">$ 10.000,000</td><td class="c">$ 0,000</td></tr>
<tr class="f" style="height:24px"><td></td><td></td><td class="r">Total</td><td class="c">100.00 %</td><td></td><td class="c">0</td><td class="c">$ 60.000,00</td><td class="c">$ 60.000,00</td><td class="c">$ 0,00</td></tr>
</table>

<div class="t sec" style="left:426px;top:294px">Valores pagados por bienes</div>
<table class="g" style="left:426px;top:307px;width:735.5px">
<colgroup><col style="width:96.7px"><col style="width:112.5px"><col style="width:76.3px"><col style="width:30px"><col style="width:38.7px"><col style="width:74px"><col style="width:123.8px"><col style="width:88px"><col></colgroup>
<tr style="height:25px"><th>Tipo de concepto</th><th>Nombre de concepto</th><th>Observación</th><th>%</th><th>Año</th><th>SMLV - Cant</th><th>Valor pagado en bienes</th><th>Valor liquidado</th><th>Saldo pendiente</th></tr>
<tr class="f" style="height:24px"><td></td><td></td><td class="r">Total</td><td></td><td></td><td class="c">0</td><td class="c">$ 0,00</td><td class="c">$ 0,00</td><td class="c">$ 0,00</td></tr>
</table>

<div class="t sec" style="left:426px;top:371px;letter-spacing:.18px">Demandado(s) responsable(s)</div>
<table class="g" style="left:426px;top:384px;width:735.5px">
<colgroup><col style="width:390px"><col style="width:86.7px"><col style="width:104.5px"><col style="width:92px"><col></colgroup>
<tr style="height:24px"><th>Demandado(s)</th><th>%</th><th>Total</th><th>Pago</th><th></th></tr>
<tr class="b" style="height:19.5px"><td class="u">CELSIA</td><td>20.000%</td><td>$ 12.000,00</td><td>$ 12.000,00</td><td><svg width="11" height="11" viewBox="0 0 12 12" style="margin:-2px 0 0 12.5px"><circle cx="6" cy="6" r="5.3" fill="none" stroke="#4b5563" stroke-width=".9"/><path d="M3.7 5.2 6 7.4 8.3 5.2" fill="none" stroke="#4b5563" stroke-width=".9" stroke-linecap="round" stroke-linejoin="round"/></svg></td></tr>
<tr class="b" style="height:19.5px"><td class="u">CORPORACION AUTONOMA DEL VALLE DEL CAUCA-CVV</td><td>20.000%</td><td>$ 12.000,00</td><td>$ 12.000,00</td><td><svg width="11" height="11" viewBox="0 0 12 12" style="margin:-2px 0 0 12.5px"><circle cx="6" cy="6" r="5.3" fill="none" stroke="#4b5563" stroke-width=".9"/><path d="M3.7 5.2 6 7.4 8.3 5.2" fill="none" stroke="#4b5563" stroke-width=".9" stroke-linecap="round" stroke-linejoin="round"/></svg></td></tr>
<tr class="b" style="height:19px"><td class="u">MINISTERIO DE AMBIENTE</td><td>60.000%</td><td>$ 36.000,00</td><td>$ 36.000,00</td><td><svg width="11" height="11" viewBox="0 0 12 12" style="margin:-2px 0 0 12.5px"><circle cx="6" cy="6" r="5.3" fill="none" stroke="#4b5563" stroke-width=".9"/><path d="M3.7 5.2 6 7.4 8.3 5.2" fill="none" stroke="#4b5563" stroke-width=".9" stroke-linecap="round" stroke-linejoin="round"/></svg></td></tr>
</table>

<div class="a" style="left:426px;top:478px;width:735.5px;height:1px;background:#c9cacc"></div>

<div class="t sec" style="left:426px;top:504.300px;letter-spacing:.36px">Total pago reconocido</div>
<div class="a" style="left:997px;top:490px;width:164.5px;height:27.5px;background:#f3f4f6;border:1px solid #e5e7eb;border-radius:3px"></div>
<div class="t" style="left:1008px;top:503.5px;color:#4b5563;font-size:10.8px;letter-spacing:-.2px">$ 60.000,00</div>

<div class="t sec" style="left:426px;top:531.600px">Intereses</div>
<table class="g" style="left:426px;top:544px;width:735.5px">
<colgroup><col style="width:470.8px"><col style="width:158.2px"><col></colgroup>
<tr style="height:25px"><th style="letter-spacing:-.36px">Nombre - Razón social / demandado(s)</th><th>Valor intereses</th><th>Detalles</th></tr>
<tr style="height:24px"><td class="u">CELSIA</td><td>$ 2.000,00</td><td><svg width="11" height="11" viewBox="0 0 12 12" style="margin:-3.300px 0 0 .700px"><circle cx="6" cy="6" r="5.3" fill="none" stroke="#4b5563" stroke-width=".9"/><path d="M3.7 5.2 6 7.4 8.3 5.2" fill="none" stroke="#4b5563" stroke-width=".9" stroke-linecap="round" stroke-linejoin="round"/></svg></td></tr>
<tr style="height:24px"><td class="u">CORPORACION AUTONOMA DEL VALLE DEL CAUCA-CVV</td><td>$ 3.000,00</td><td><svg width="11" height="11" viewBox="0 0 12 12" style="margin:-3.100px 0 0 .700px"><circle cx="6" cy="6" r="5.3" fill="none" stroke="#4b5563" stroke-width=".9"/><path d="M3.7 5.2 6 7.4 8.3 5.2" fill="none" stroke="#4b5563" stroke-width=".9" stroke-linecap="round" stroke-linejoin="round"/></svg></td></tr>
<tr style="height:24px"><td class="u">MINISTERIO DE AMBIENTE</td><td>$ 2.000,00</td><td><svg width="11" height="11" viewBox="0 0 12 12" style="margin:-2px 0 0 .700px"><circle cx="6" cy="6" r="5.3" fill="none" stroke="#4b5563" stroke-width=".9"/><path d="M3.7 5.2 6 7.4 8.3 5.2" fill="none" stroke="#4b5563" stroke-width=".9" stroke-linecap="round" stroke-linejoin="round"/></svg></td></tr>
</table>

<!-- bank card -->
<div class="a mcard" style="left:426px;top:658px;width:360px;height:183px"></div>
<svg class="a" style="left:441.5px;top:679px" width="14" height="13" viewBox="0 0 14 13"><path d="M1.2 4.6V11a1 1 0 0 0 1 1h9.4a1 1 0 0 0 1-1V5.6a1 1 0 0 0-1-1H1.2zm0 0L9.6 1.1a.7.7 0 0 1 1 .6v2.9" fill="none" stroke="#e8891c" stroke-width="1.1" stroke-linejoin="round"/><circle cx="10.2" cy="8.3" r=".8" fill="#e8891c"/></svg>
<div class="t" style="left:461px;top:683.3px;color:#374151;font-size:10.5px;font-weight:700;letter-spacing:-.13px">Información cuenta Bancaria</div>
<div class="a bh" style="left:442.5px;top:707px;width:326.8px;height:31.8px"></div>
<div class="t bht" style="left:448px;top:717.700px">Tip.</div>
<div class="t bht" style="left:448px;top:728.100px">Cta.</div>
<div class="t bht" style="left:488.5px;top:717.700px">No. Cuenta</div>
<div class="t bht" style="left:488.5px;top:728.100px">bancaria</div>
<div class="t bht" style="left:568px;top:723.100px">Banco</div>
<div class="t bht" style="left:656.5px;top:723.100px">Cod. Banco</div>
<div class="t bht" style="left:714.5px;top:723.100px">Estado</div>
<div class="a" style="left:442.5px;top:738.8px;width:326.8px;height:38px;background:#f9fafb;border-bottom:1px solid #e5e7eb"></div>
<div class="t bt" style="left:448px;top:758.200px;letter-spacing:-.05px">Ahorro</div>
<div class="t bt" style="left:488.5px;top:758.200px;letter-spacing:-.28px">84355259462</div>
<div class="t bt" style="left:568px;top:752.2px;font-size:9.3px;letter-spacing:-.25px">BANCOLOMBIA</div>
<div class="t bt" style="left:568px;top:765.2px;font-size:9.3px;letter-spacing:-.25px">S.A.</div>
<div class="t bt" style="left:656.5px;top:758.200px;letter-spacing:-.28px">890903938</div>
<div class="a" style="left:714.5px;top:751px;width:48.5px;height:14px;background:#f3f4f6;border-radius:3px"></div>
<div class="t" style="left:720px;top:758.5px;color:#5b6472;font-size:7.9px">Registrada</div>

<!-- documents card -->
<div class="a mcard" style="left:802px;top:658px;width:360px;height:183px"></div>
<svg class="a" style="left:820px;top:679px" width="10.5" height="13" viewBox="0 0 10.5 13"><path d="M.7 2A1.3 1.3 0 0 1 2 .7h4.2l3.6 3.6V11A1.3 1.3 0 0 1 8.5 12.3H2A1.3 1.3 0 0 1 .7 11z M6 .9v2.6a1 1 0 0 0 1 1h2.6" fill="none" stroke="#374151" stroke-width="1.2" stroke-linejoin="round"/></svg>
<div class="t" style="left:837.5px;top:683.3px;color:#374151;font-size:10.5px;font-weight:700;letter-spacing:-.13px">Documentos del beneficiario</div>
<div class="a bh" style="left:818px;top:707px;width:327px;height:21px"></div>
<div class="t bht" style="left:824px;top:717.700px">Nombre del Documento</div>
<div class="t bht" style="left:962.5px;top:717.700px">Tipo</div>
<div class="t bht" style="left:1000.5px;top:717.700px">F. Sincronización</div>
<div class="t bht" style="left:1107.5px;top:717.700px">Acción</div>
<div class="a" style="left:818px;top:728px;width:327px;height:97px;background:#f9fafb"></div>
<svg class="a" style="left:971.5px;top:751.5px" width="20" height="18.5" viewBox="0 0 20 18.5"><path d="M1 9.5 4.3 2.2A2 2 0 0 1 6.1 1h7.8a2 2 0 0 1 1.8 1.2L19 9.5v6a2 2 0 0 1-2 2H3a2 2 0 0 1-2-2zM1.2 9.6h4.6c.6 0 .9.4 1.1.9.5 1.300 1.600 2.100 3.100 2.100s2.600-.8 3.100-2.100c.2-.5.5-.9 1.100-.9h4.600" fill="none" stroke="#9ca3af" stroke-width="1.4" stroke-linejoin="round"/></svg>
<div class="t" style="left:915.5px;top:785.8px;color:#a3a9b3;font-size:9.7px;letter-spacing:-.14px">No hay documentos registrados</div>


<!-- ======================= DESKTOP ======================= -->
<div class="a" id="desk"></div>
<div class="a" id="dock"></div>
<div class="a" style="left:0;top:0;width:1600px;height:897px;z-index:52;pointer-events:none">
<div class="a" style="left:642.500px;top:864.800px;width:28.500px;height:28px;border-radius:6px;background:#3b3b3b"></div>
<div class="a" style="left:960px;top:865.700px;width:28.200px;height:28px;border-radius:7px;background:#4a4a4a"></div>
<!-- files -->
<svg class="a" style="left:616.500px;top:870.500px" width="17" height="16" viewBox="0 0 17 16"><path d="M.5 2.200C.5 1.300 1.200.6 2.100.6h4l1.600 1.800H.5z" fill="#5d8f2e"/><rect x=".5" y="2.200" width="16" height="13" rx="1.300" fill="#aeada8"/><rect x=".5" y="2.200" width="16" height="2" fill="#6da336"/><rect x="6" y="6.500" width="5" height="1.200" rx=".6" fill="#f3f3f1"/></svg>
<!-- chrome -->
<svg class="a" style="left:647.500px;top:869.500px" width="19" height="19" viewBox="0 0 19 19"><circle cx="9.500" cy="9.500" r="9.300" fill="#e84435"/><path d="M9.500 9.500 1.450 4.850A9.300 9.300 0 0 0 8.700 18.770z" fill="#2fa650"/><path d="M9.500 9.500 8.700 18.770A9.300 9.300 0 0 0 17.550 4.850z" fill="#f8bd0e"/><path d="M9.500 9.500 17.550 4.850A9.300 9.300 0 0 0 1.450 4.850z" fill="#e84435"/><circle cx="9.500" cy="9.500" r="4.300" fill="#f4f4f4"/><circle cx="9.500" cy="9.500" r="3.400" fill="#3f7fe8"/></svg>
<!-- vscode -->
<svg class="a" style="left:680.500px;top:870.500px" width="17" height="17" viewBox="0 0 17 17"><path d="M12.300.5 16.500 2.400V14.600L12.300 16.500 4.700 9.600 1.800 11.900.5 11.200V5.800L1.800 5.100 4.700 7.400zM12.300 4.700 7.700 8.500 12.300 12.300z" fill="#1f9cf0"/><path d="M12.300.5 16.500 2.400V14.600L12.300 16.500z" fill="#0f7fd0"/></svg>
<!-- firefox -->
<svg class="a" style="left:711.500px;top:869.500px" width="18" height="19" viewBox="0 0 18 19"><circle cx="9" cy="10.500" r="8.300" fill="#ff7a1a"/><path d="M2 6.500C3 3 6 1 8 2c-1 1.500 0 3 2 3.500 3 .8 5.500 3 5.500 6.500A6.800 6.800 0 0 1 2 12z" fill="#ffbd2e"/><path d="M10.500.5c3 1.500 6 4.500 6.800 8-.8-1.300-2-2.200-3.200-2.600C13.800 3.700 12.500 2 10.500.5z" fill="#ffd84a"/><circle cx="9.200" cy="10.800" r="3.800" fill="#8a3bd6"/><path d="M1 9c1.500-1 3.500-.8 4.700.5 1.200 1.300 3.300 1.300 4.300.5-.5 2.500-3 4-5.500 3.300C2.500 12.700 1.200 11 1 9z" fill="#ff4f5e"/></svg>
<!-- spotify -->
<svg class="a" style="left:743px;top:866px" width="22" height="22" viewBox="0 0 22 22"><circle cx="8.500" cy="13.300" r="7.500" fill="#1ed760"/><path d="M4.300 10.800c3-.9 6-.6 8.500.8M4.800 13.400c2.500-.7 4.900-.4 7 .8M5.300 15.900c2-.5 3.800-.3 5.500.6" fill="none" stroke="#17201a" stroke-width="1.200" stroke-linecap="round"/><circle cx="15.800" cy="5.800" r="5.300" fill="#1d8a2e"/><rect x="15.400" y="3.800" width=".9" height="4" fill="#9fd0a6"/></svg>
<div class="a" style="left:768px;top:870px;width:1px;height:18px;background:#4a4b4b"></div>
<!-- terminal -->
<svg class="a" style="left:777px;top:871.500px" width="17" height="14" viewBox="0 0 17 14"><rect x=".3" y=".3" width="16.400" height="13.400" rx="1.600" fill="#4d4d4d"/><rect x=".3" y=".3" width="16.400" height="2" rx="1" fill="#5d5d5d"/><path d="M2.800 4.800 4.800 6 2.800 7.200" fill="none" stroke="#e8e8e8" stroke-width=".9"/><rect x="5.500" y="7.300" width="3" height=".9" fill="#e8e8e8"/></svg>
<!-- text editor -->
<svg class="a" style="left:809px;top:870px" width="17" height="18" viewBox="0 0 17 18"><rect x="1" y=".5" width="14" height="17" rx="1.500" fill="#f1efe9"/><rect x="1" y=".5" width="14" height="3.500" rx="1.500" fill="#3f8ae0"/><path d="M3.500 7h9M3.500 9.500h9M3.500 12h6" stroke="#c9c6bd" stroke-width=".9"/><path d="M7 14.500 8 11.500 14.200 5.300 16.200 7.300 10 13.500z" fill="#f2b33d"/><path d="M14.200 5.300 15.200 4.300 17.200 6.300 16.200 7.300z" fill="#e0574f"/></svg>
<!-- settings -->
<svg class="a" style="left:840.500px;top:870.500px" width="17" height="17" viewBox="0 0 17 17"><rect x=".3" y=".3" width="16.400" height="16.400" rx="2.500" fill="#8f8f8f"/><circle cx="8.500" cy="8.500" r="4.300" fill="none" stroke="#efefef" stroke-width="2"/><path d="M8.500 1.800V4M8.500 13v2.200M1.800 8.500H4M13 8.500h2.200M3.800 3.800 5.300 5.300M11.700 11.700l1.500 1.500M3.800 13.200l1.500-1.500M11.700 5.300l1.500-1.500" stroke="#efefef" stroke-width="1.700"/></svg>
<!-- calc -->
<svg class="a" style="left:873.600px;top:869.800px" width="14.600" height="17.400" viewBox="0 0 15 19"><path d="M1.500.5H10l4.500 4.500V17a1.500 1.500 0 0 1-1.500 1.500H1.500A1.500 1.500 0 0 1 0 17V2A1.500 1.500 0 0 1 1.500.5z" fill="#27a033"/><path d="M10 .5 14.500 5H11a1 1 0 0 1-1-1z" fill="#0f5c18"/><rect x="3" y="8" width="7.500" height="6" fill="#e7f5e8"/><path d="M3 11h7.500M6.700 8v6" stroke="#1f8a2f" stroke-width=".8"/><rect x="8" y="11.500" width="4.500" height="4.500" fill="#c9e8cc" stroke="#1f8a2f" stroke-width=".6"/></svg>
<!-- writer -->
<svg class="a" style="left:905.300px;top:869.800px" width="14.600" height="17.400" viewBox="0 0 15 19"><path d="M1.500.5H10l4.500 4.500V17a1.500 1.500 0 0 1-1.500 1.500H1.500A1.500 1.500 0 0 1 0 17V2A1.500 1.500 0 0 1 1.500.5z" fill="#2a8fcb"/><path d="M10 .5 14.500 5H11a1 1 0 0 1-1-1z" fill="#0d4f7a"/><path d="M3 8h4M3 10h4M3 12h9M3 14h9" stroke="#e8f3fb" stroke-width=".9"/><rect x="8" y="7.300" width="4" height="3.300" fill="#e8f3fb"/></svg>
<!-- trash -->
<svg class="a" style="left:937px;top:870px" width="14" height="18" viewBox="0 0 14 18"><rect x=".3" y=".3" width="13.400" height="17.400" rx="1.300" fill="#cfcfcb"/><rect x="2.300" y="1.800" width="9.400" height="2" fill="#f3f3f1"/><circle cx="7" cy="11" r="3.300" fill="none" stroke="#4a9b4e" stroke-width="1.500" stroke-dasharray="4.500 2.400"/></svg>
<!-- ubuntu -->
<svg class="a" style="left:965px;top:870.400px" width="18" height="18" viewBox="0 0 18 18"><circle cx="9.200" cy="9" r="5.600" fill="none" stroke="#f4f4f4" stroke-width="1.400"/><circle cx="3.500" cy="9" r="2.700" fill="#4a4a4a"/><circle cx="11.900" cy="4.200" r="2.700" fill="#4a4a4a"/><circle cx="11.600" cy="14" r="2.700" fill="#4a4a4a"/><circle cx="3.500" cy="9" r="1.800" fill="#f4f4f4"/><circle cx="11.900" cy="4.500" r="1.800" fill="#f4f4f4"/><circle cx="11.600" cy="13.800" r="1.800" fill="#f4f4f4"/></svg>
<!-- running dots -->
<div class="a dot" style="left:656px"></div><div class="a dot" style="left:687.800px"></div><div class="a dot" style="left:719.300px"></div><div class="a dot" style="left:751px"></div><div class="a dot" style="left:785px"></div><div class="a dot" style="left:816.700px"></div><div class="a dot" style="left:848.300px"></div><div class="a dot" style="left:878.300px"></div><div class="a dot" style="left:882.300px"></div><div class="a dot" style="left:911.800px"></div>
</div>


</div>
</body>
</html>
